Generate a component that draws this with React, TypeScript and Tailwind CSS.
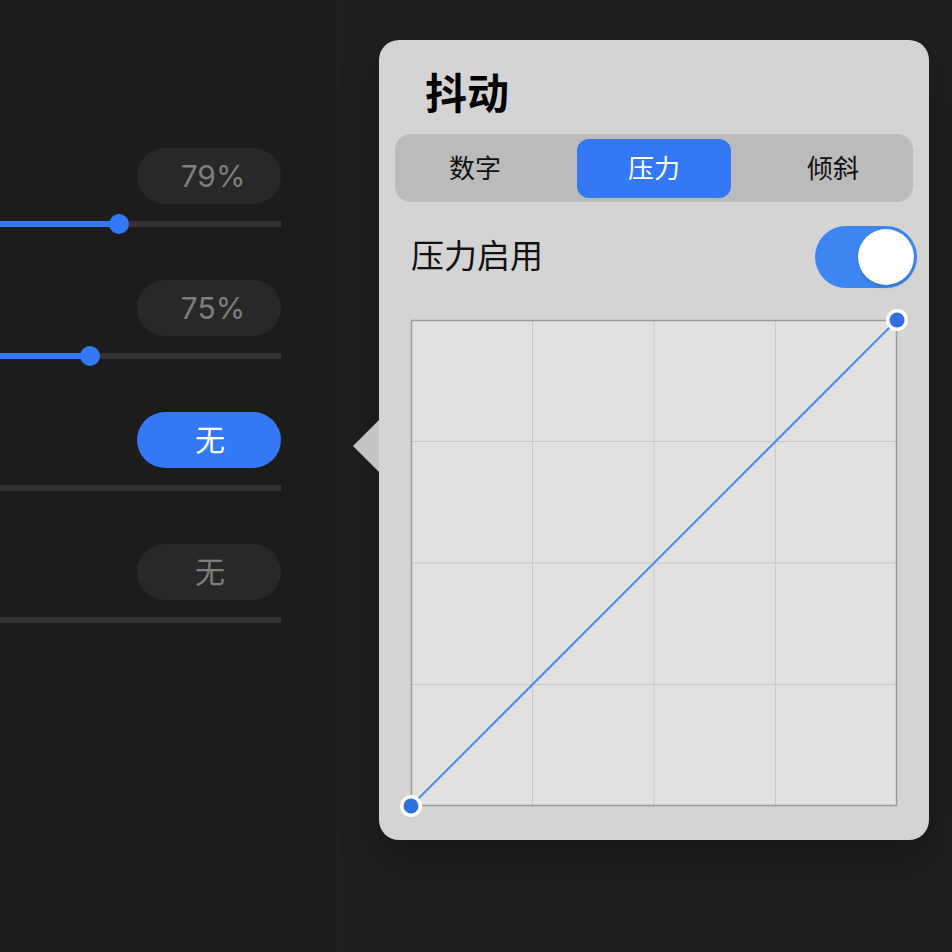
import React from 'react';

const font = "font-['Inter','Noto_Sans_CJK_SC',sans-serif]";

type Row = { value: string; active?: boolean; fill?: number; shift?: boolean };

const rows: Row[] = [
  { value: '79%', fill: 119, shift: true },
  { value: '75%', fill: 90, shift: true },
  { value: '无', active: true },
  { value: '无' },
];

function SettingRow({ row }: { row: Row }) {
  return (
    <div className="flex flex-col h-[132px]">
      <div className="flex justify-end">
        <div
          className={`w-[144px] h-[56px] rounded-full flex items-center justify-center text-[30px] ${
            row.shift ? 'pl-[8px]' : 'pl-[2px]'
          } ${row.active ? 'bg-[#3478f6] text-white' : 'bg-[#282828] text-[#7e7e7e]'}`}
        >
          {row.value}
        </div>
      </div>
      <div className="relative mt-[17px] h-[6px] bg-[#333333]">
        {row.fill !== undefined && (
          <>
            <div className="absolute left-0 top-0 h-[6px] bg-[#3478f6]" style={{ width: row.fill }} />
            <div
              className="absolute top-[-7px] w-[20px] h-[20px] rounded-full bg-[#3478f6]"
              style={{ left: row.fill - 10 }}
            />
          </>
        )}
      </div>
    </div>
  );
}

function PressureCurve() {
  const size = 486;
  const step = size / 4;
  return (
    <svg width={size} height={size} className="overflow-visible block">
      <rect x={0} y={0} width={size} height={size} fill="#e1e1e1" />
      {[1, 2, 3].map((i) => (
        <g key={i}>
          <line x1={i * step} y1={0} x2={i * step} y2={size} stroke="#c9c9c9" strokeWidth={1} />
          <line x1={0} y1={i * step} x2={size} y2={i * step} stroke="#c9c9c9" strokeWidth={1} />
        </g>
      ))}
      <rect x={0.5} y={0.5} width={size - 1} height={size - 1} fill="none" stroke="#9d9d9d" strokeWidth={1.5} />
      <line x1={0} y1={size} x2={size} y2={0} stroke="#4a8af2" strokeWidth={2} />
      <circle cx={0} cy={size} r={11} fill="#ffffff" />
      <circle cx={0} cy={size} r={7.5} fill="#2f6fe0" />
      <circle cx={size} cy={0} r={11} fill="#ffffff" />
      <circle cx={size} cy={0} r={7.5} fill="#2f6fe0" />
    </svg>
  );
}

export default function App() {
  return (
    <div className={`w-[952px] h-[952px] flex overflow-hidden ${font}`}>
      {/* Left settings list */}
      <aside className="w-[338px] h-full bg-[#1c1c1c] border-r border-[#262626] pr-[56px] pt-[148px]">
        {rows.map((r, i) => (
          <SettingRow key={i} row={r} />
        ))}
      </aside>

      {/* Popover area */}
      <main className="flex-1 h-full bg-[#1f1f1f] pl-[41px] pt-[40px]">
        <div className="relative w-[550px] h-[800px] rounded-[20px] bg-[#d4d4d4] shadow-[0_20px_40px_rgba(0,0,0,0.25)]">
          {/* Arrow */}
          <div className="absolute left-[-26px] top-[380px] w-[26px] h-[52px] bg-[#c5c5c5] [clip-path:polygon(100%_0,0_50%,100%_100%)]" />

          <div className="pt-[30px] pl-[46px] h-[48px] box-content text-[42px] leading-[48px] font-bold text-black">
            抖动
          </div>

          <div className="mt-[16px] mx-[16px] h-[68px] rounded-[16px] bg-[#bbbbbb] px-[4px] flex items-center gap-[26px]">
            <div className="w-[152px] flex justify-center text-[26px] text-[#111]">数字</div>
            <div className="w-[154px] h-[59px] rounded-[12px] bg-[#3478f6] flex items-center justify-center text-[26px] text-white">
              压力
            </div>
            <div className="w-[152px] flex justify-center text-[26px] text-[#111]">倾斜</div>
          </div>

          <div className="mt-[24px] h-[62px] pl-[32px] pr-[12px] flex items-center justify-between">
            <span className="text-[33px] text-[#111]">压力启用</span>
            <div className="w-[102px] h-[62px] rounded-full bg-[#3d86f2] p-[3px] flex justify-end">
              <div className="w-[56px] h-[56px] rounded-full bg-white shadow-[0_2px_4px_rgba(0,0,0,0.15)]" />
            </div>
          </div>

          <div className="mt-[32px] ml-[32px]">
            <PressureCurve />
          </div>
        </div>
      </main>
    </div>
  );
}
